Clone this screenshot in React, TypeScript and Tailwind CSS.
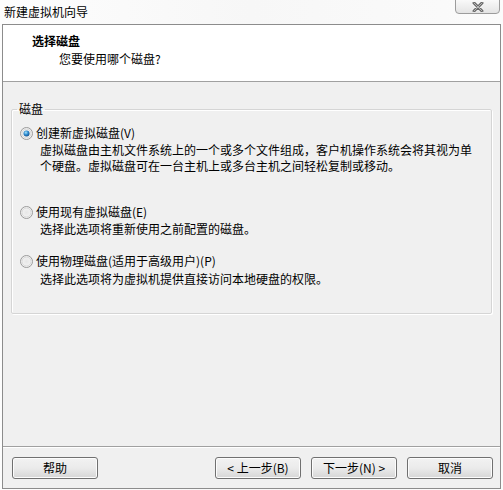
import React from "react";

function Radio({ checked }: { checked?: boolean }) {
  return (
    <svg width="13" height="13" viewBox="0 0 13 13" className="shrink-0">
      <defs>
        <radialGradient id={checked ? "rg1" : "rg0"} cx="0.5" cy="0.5" r="0.6">
          <stop offset="0" stopColor="#e6e6e6" />
          <stop offset="1" stopColor="#f8f8f8" />
        </radialGradient>
        <radialGradient id="dot" cx="0.4" cy="0.35" r="0.7">
          <stop offset="0" stopColor="#a9e4f9" />
          <stop offset="0.5" stopColor="#2d8bd1" />
          <stop offset="1" stopColor="#124c86" />
        </radialGradient>
      </defs>
      <circle cx="6.5" cy="6.5" r="6" fill={checked ? "url(#rg1)" : "url(#rg0)"} stroke="#9a9a9a" strokeWidth="1" />
      <circle cx="6.5" cy="6.5" r="4.5" fill="none" stroke="#d8d8d8" strokeWidth="1" />
      {checked && <circle cx="6.5" cy="6.5" r="3" fill="url(#dot)" />}
    </svg>
  );
}

function Btn({ children }: { children: React.ReactNode }) {
  return (
    <button className="w-[86px] h-[22px] rounded-[3px] border border-[#707070] bg-gradient-to-b from-[#f2f2f2] via-[#ebebeb] to-[#d6d6d6] text-[12px] leading-[14px] text-black shadow-[inset_0_0_0_1px_#fcfcfc] flex items-center justify-center">
      {children}
    </button>
  );
}

export default function App() {
  return (
    <div
      className="w-[503px] h-[490px] bg-gradient-to-r from-[#fdfdfd] via-[#f7f7f7] to-[#fbfbfb] relative text-black overflow-hidden"
      style={{ fontFamily: '"Noto Sans CJK SC", "Noto Sans", sans-serif' }}
    >
      {/* title bar */}
      <div className="h-[24px] flex items-center pl-[4px] text-[12px] leading-[14px]">
        新建虚拟机向导
      </div>
      <div className="absolute top-[-1px] right-[3px] w-[45px] h-[15px] rounded-b-[4px] border border-[#9c9c9c] bg-gradient-to-b from-[#f9f9f9] to-[#e4e4e4] flex items-center justify-center">
        <svg width="12" height="10" viewBox="0 0 12 10">
          <path d="M2 1 L10 9 M10 1 L2 9" stroke="#f6f6f6" strokeWidth="4" strokeLinecap="round" />
          <path d="M2 1 L10 9 M10 1 L2 9" stroke="#6a6a6a" strokeWidth="3" strokeLinecap="round" />
          <path d="M2 1 L10 9 M10 1 L2 9" stroke="#b8b8b8" strokeWidth="1" strokeLinecap="round" />
        </svg>
      </div>

      {/* window body */}
      <div className="ml-[2px] w-[499px] h-[465px] border border-[#8c8c8c] bg-[#f0f0f0] flex flex-col">
        {/* header */}
        <div className="h-[57px] bg-white border-b border-[#a0a0a0] pt-[7px] text-[12px] leading-[18px]">
          <div className="pl-[29px] font-bold">选择磁盘</div>
          <div className="pl-[56px]">您要使用哪个磁盘?</div>
        </div>

        {/* group box */}
        <fieldset className="mt-[20px] mx-[8px] h-[212px] border border-[#d5d5d5] rounded-[2px] shadow-[inset_1px_1px_0_#ffffff,1px_1px_0_#ffffff] px-0 pb-0 pt-0 m-0 min-w-0">
          <legend className="ml-[5px] px-[2px] text-[12px] leading-[14px]">磁盘</legend>
          <div className="pl-[8px] pt-[9px] text-[12px] leading-[16px]">
            <div className="flex items-center gap-[3px] h-[16px]">
              <Radio checked />
              <span>创建新虚拟磁盘(V)</span>
            </div>
            <div className="pl-[20px] pt-[1px] w-[470px]">
              <div>虚拟磁盘由主机文件系统上的一个或多个文件组成，客户机操作系统会将其视为单</div>
              <div>个硬盘。虚拟磁盘可在一台主机上或多台主机之间轻松复制或移动。</div>
            </div>

            <div className="flex items-center gap-[3px] h-[16px] mt-[30px]">
              <Radio />
              <span>使用现有虚拟磁盘(E)</span>
            </div>
            <div className="pl-[20px] pt-[1px]">选择此选项将重新使用之前配置的磁盘。</div>

            <div className="flex items-center gap-[3px] h-[16px] mt-[16px]">
              <Radio />
              <span>使用物理磁盘(适用于高级用户)(P)</span>
            </div>
            <div className="pl-[20px] pt-[2px]">选择此选项将为虚拟机提供直接访问本地硬盘的权限。</div>
          </div>
        </fieldset>

        <div className="flex-1" />

        {/* separator */}
        <div className="border-t border-[#a0a0a0] border-b border-b-white" />

        {/* buttons */}
        <div className="h-[40px] flex items-center pl-[9px] pr-[7px] pb-[1px]">
          <Btn>帮助</Btn>
          <div className="flex-1" />
          <div className="flex gap-[10px]">
            <Btn>&lt; 上一步(B)</Btn>
            <Btn>下一步(N) &gt;</Btn>
            <Btn>取消</Btn>
          </div>
        </div>
      </div>
    </div>
  );
}
